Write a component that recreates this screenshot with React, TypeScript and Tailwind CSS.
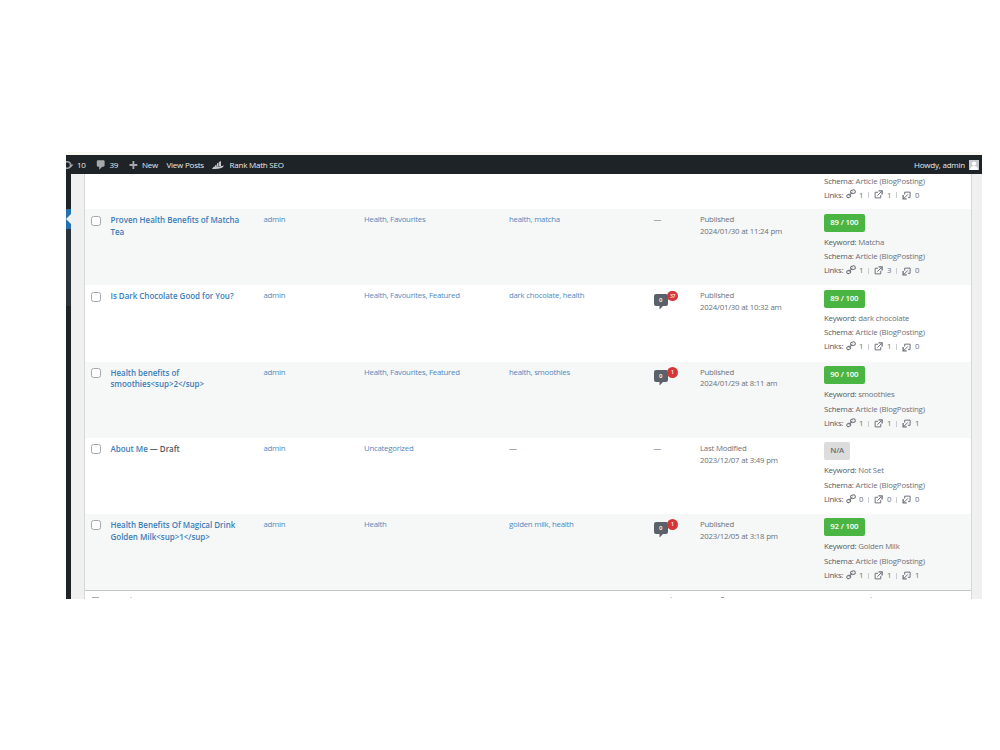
import type { ReactNode } from 'react'

interface Post {
  title: string
  state?: string
  categories: string
  tags: string
  pending?: string
  status: string
  date: string
  score: string
  keyword: string
  links: [number, number, number]
}

const posts: Post[] = [
  {
    title: 'Proven Health Benefits of Matcha Tea',
    categories: 'Health, Favourites',
    tags: 'health, matcha',
    status: 'Published',
    date: '2024/01/30 at 11:24 pm',
    score: '89 / 100',
    keyword: 'Matcha',
    links: [1, 3, 0],
  },
  {
    title: 'Is Dark Chocolate Good for You?',
    categories: 'Health, Favourites, Featured',
    tags: 'dark chocolate, health',
    pending: '37',
    status: 'Published',
    date: '2024/01/30 at 10:32 am',
    score: '89 / 100',
    keyword: 'dark chocolate',
    links: [1, 1, 0],
  },
  {
    title: 'Health benefits of smoothies<sup>2</sup>',
    categories: 'Health, Favourites, Featured',
    tags: 'health, smoothies',
    pending: '1',
    status: 'Published',
    date: '2024/01/29 at 8:11 am',
    score: '90 / 100',
    keyword: 'smoothies',
    links: [1, 1, 1],
  },
  {
    title: 'About Me',
    state: 'Draft',
    categories: 'Uncategorized',
    tags: '',
    status: 'Last Modified',
    date: '2023/12/07 at 3:49 pm',
    score: 'N/A',
    keyword: 'Not Set',
    links: [0, 0, 0],
  },
  {
    title: 'Health Benefits Of Magical Drink Golden Milk<sup>1</sup>',
    categories: 'Health',
    tags: 'golden milk, health',
    pending: '1',
    status: 'Published',
    date: '2023/12/05 at 3:18 pm',
    score: '92 / 100',
    keyword: 'Golden Milk',
    links: [1, 1, 1],
  },
]

function ChainIcon() {
  return (
    <svg viewBox="0 0 20 20" className="size-[10px]" fill="none" stroke="#6c7178" strokeWidth="2">
      <rect x="9" y="2" width="9.500" height="7" rx="3.500" transform="rotate(-15 14 5)" />
      <rect x="1.500" y="11" width="8" height="6" rx="3" transform="rotate(-20 5 14)" />
      <path d="M6 13.500l7-8" />
    </svg>
  )
}

function ExternalIcon() {
  return (
    <svg viewBox="0 0 20 20" className="size-[9px]" fill="none" stroke="#6c7178" strokeWidth="2.200">
      <path d="M9 5H2.500v12.500H15V11" />
      <path d="M7.500 12.500L16 4" />
      <path d="M10 2h8v8" strokeWidth="3" />
    </svg>
  )
}

function IncomingIcon() {
  return (
    <svg viewBox="0 0 20 20" className="size-[9px]" fill="none" stroke="#6c7178" strokeWidth="2.200">
      <path d="M6 8V2.500h12V14h-5" />
      <path d="M13 7.500L5 15.500" />
      <path d="M2.500 9v8.500h8" strokeWidth="3" />
    </svg>
  )
}

function LinkCounts({ links }: { links: [number, number, number] }) {
  return (
    <div className="flex h-[14.600px] items-center">
      <span className="w-[22px] text-[#50575e]">Links:</span>
      <span className="flex w-[28px] items-center">
        <span className="flex w-[13px] pb-[2px]"><ChainIcon /></span>
        <span className="w-[8.500px]">{links[0]}</span>
        <i className="h-[6px] w-px bg-[#c9cbcd]" />
      </span>
      <span className="flex w-[28px] items-center">
        <span className="flex w-[13px] pb-px"><ExternalIcon /></span>
        <span className="w-[8.500px]">{links[1]}</span>
        <i className="h-[6px] w-px bg-[#c9cbcd]" />
      </span>
      <span className="flex items-center">
        <span className="flex w-[13px]"><IncomingIcon /></span>
        {links[2]}
      </span>
    </div>
  )
}

function Schema() {
  return (
    <div className="h-[14.600px] leading-[14.600px] tracking-[-0.150px]">
      <span className="text-[#50575e]">Schema:</span> Article (BlogPosting)
    </div>
  )
}

function Bubble({ pending }: { pending: string }) {
  return (
    <div className="relative mt-[8.500px] ml-[1px] h-[17px] w-[28px]">
      <svg viewBox="0 0 14 16" className="h-[16px] w-[14px]" fill="#5b6168">
        <path d="M2 0h10a2 2 0 0 1 2 2v8a2 2 0 0 1-2 2H9L5.500 15.500V12H2a2 2 0 0 1-2-2V2a2 2 0 0 1 2-2z" />
      </svg>
      <span className="absolute top-0 left-0 w-[14px] text-center text-[6px] leading-[12px] font-semibold text-white">0</span>
      <span className="absolute -top-[3px] left-[13.500px] flex h-[10.500px] min-w-[10.500px] items-center justify-center rounded-full bg-[#d63638] px-[3px] text-[5px] leading-none font-semibold text-white">
        {pending}
      </span>
    </div>
  )
}

function Row({ post, odd }: { post: Post; odd: boolean }) {
  return (
    <div className={`flex h-[76.200px] shrink-0 leading-[11.900px] ${odd ? 'bg-[#f6f7f7]' : 'bg-white'}`}>
      <div className="w-[25.500px] pt-[6.500px] pl-[5.500px]">
        <div className="size-[10px] rounded-[2.500px] border border-[#a5a8ac] bg-white" />
      </div>
      <div className="w-[153px] pt-[5px]">
        <div className="w-[134px] text-[8px] font-semibold tracking-[-0.030px] text-[#3c7db8]">
          {post.title}
          {post.state && <span className="text-[#50575e]"> — {post.state}</span>}
        </div>
      </div>
      <div className="w-[100.500px] pt-[5px] text-[#4f8ac0]">admin</div>
      <div className="w-[145px] pt-[5px] text-[#4f8ac0]">{post.categories}</div>
      <div className="w-[143.500px] pt-[5px] text-[#4f8ac0]">
        {post.tags || <span className="text-[#646970]">—</span>}
      </div>
      <div className="w-[47.500px]">
        {post.pending ? <Bubble pending={post.pending} /> : <div className="pt-[5px] pl-[1px]">—</div>}
      </div>
      <div className="w-[124px] pt-[5px] tracking-[-0.200px]">
        <div>{post.status}</div>
        <div>{post.date}</div>
      </div>
      <div className="pt-[4.500px]">
        <div
          className={`mb-[3px] flex h-[18px] w-fit items-center rounded-[2px] px-[6.300px] text-[7.800px] font-semibold tracking-[-0.180px] ${
            post.score === 'N/A' ? 'bg-[#dcdcdc] text-[#6a6e73]' : 'bg-[#4bb543] text-white'
          }`}
        >
          {post.score}
        </div>
        <div className="h-[14.600px] leading-[14.600px] tracking-[-0.180px]">
          <span className="text-[#50575e]">Keyword:</span> {post.keyword}
        </div>
        <Schema />
        <LinkCounts links={post.links} />
      </div>
    </div>
  )
}

function BarItem({ className, children }: { className?: string; children: ReactNode }) {
  return <span className={`flex items-center ${className ?? ''}`}>{children}</span>
}

function AdminBar() {
  return (
    <div className="flex h-[19.500px] shrink-0 items-center bg-[#1d2327] pt-px text-[8px] tracking-[-0.220px] text-[#e8e9ea]">
      <BarItem className="w-[28.500px]">
        <svg viewBox="0 0 8 10" className="mr-[3px] h-[10px] w-[8px]" fill="none" stroke="#a7aaad" strokeWidth="1.500">
          <path d="M0 2.200a3.300 3.300 0 0 1 4.800 2.300M0 7.800a3.300 3.300 0 0 0 4.800-2.300" />
          <path d="M3 4.500h4.500L5.200 7z" fill="#a7aaad" stroke="none" />
        </svg>
        10
      </BarItem>
      <BarItem className="w-[33px]">
        <svg viewBox="0 0 20 20" className="mr-[3px] size-[12px]" fill="#a7aaad">
          <path d="M5 2h9c1.100 0 2 .9 2 2v7c0 1.100-.9 2-2 2h-2l-5 5v-5H5c-1.100 0-2-.9-2-2V4c0-1.100.9-2 2-2z" />
        </svg>
        39
      </BarItem>
      <BarItem className="w-[39px]">
        <svg viewBox="0 0 20 20" className="mr-[2.500px] size-[12px]" fill="#a7aaad">
          <path d="M17 7v3h-5v5H9v-5H4V7h5V2h3v5h5z" transform="translate(-1.500 1.500)" />
        </svg>
        New
      </BarItem>
      <BarItem className="w-[45.500px]">View Posts</BarItem>
      <BarItem>
        <svg viewBox="0 0 24 20" className="mr-[5.500px] h-[10px] w-[12px]" fill="#c3c5c8">
          <path d="M6 11l3-2v5H6zM10 7l3-2v8h-3zM14 4l4-2v10h-4z" />
          <path d="M0 18c2-4 4-5 7-5 5 0 9 0 17-2l-3 4c-5 2-12 3-21 3z" />
        </svg>
        Rank Math SEO
      </BarItem>
      <BarItem className="mr-[3.500px] ml-auto">
        Howdy, admin
        <svg viewBox="0 0 10 10" className="ml-[3.500px] size-[10px]">
          <rect width="10" height="10" fill="#c8cacc" />
          <circle cx="5" cy="3.600" r="2.100" fill="#fff" />
          <path d="M1.200 10c0-3 1.500-4 3.800-4s3.800 1 3.800 4z" fill="#fff" />
        </svg>
      </BarItem>
    </div>
  )
}

export default function App() {
  return (
    <div className="h-[750px] w-[1000px] overflow-hidden bg-white pt-[152px] pl-[66px] font-['Open_Sans','Noto_Sans',sans-serif] whitespace-nowrap">
      <div className="h-[2.500px] w-[916px] bg-[#f8faf1]" />
      <div className="flex h-[444px] w-[916px] flex-col overflow-hidden bg-[#f0f0f1]">
        <AdminBar />
        <div className="flex min-h-0 flex-1">
          <div className="flex w-[5px] flex-col bg-[#1d2327]">
            <div className="h-[34.500px]" />
            <div className="flex h-[20.500px] items-center justify-end bg-[#2271b1]">
              <svg viewBox="0 0 5 10" className="h-[10px] w-[5px]" fill="#f0f0f1">
                <path d="M5 0v10L0 5z" />
              </svg>
            </div>
            <div className="h-[77px] bg-[#2c3338]" />
          </div>
          <div className="ml-[13px] flex w-[888px] flex-col overflow-hidden border-x border-[#d5d7d9] bg-white text-[7.800px] tracking-[-0.240px] text-[#6c7178]">
            <div className="-mt-[0.500px] h-[35.700px] shrink-0 pl-[739px]">
              <Schema />
              <LinkCounts links={[1, 1, 0]} />
            </div>
            <div className="whitespace-normal">
              {posts.map((post, i) => (
                <Row key={post.title} post={post} odd={i % 2 === 0} />
              ))}
            </div>
            {/* top edge of the repeated header row */}
            <div className="flex shrink-0 items-start border-t border-[#c3c4c7] pt-[6px]">
              <div className="ml-[7px] h-px w-[7px] bg-[#a5a8ac]" />
              <div className="ml-[31px] h-px w-[2px] bg-[#d5d7d9]" />
              <div className="ml-[538px] h-px w-[2px] bg-[#d5d7d9]" />
              <div className="ml-[49px] h-px w-[3px] bg-[#9a9da1]" />
              <div className="ml-[146px] h-px w-[2px] bg-[#d5d7d9]" />
            </div>
          </div>
        </div>
      </div>
    </div>
  )
}
